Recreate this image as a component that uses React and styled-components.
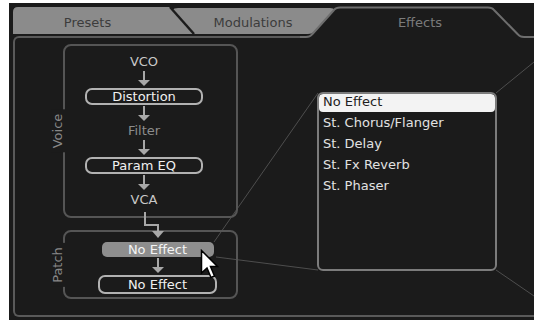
import React from 'react';
import styled, { createGlobalStyle } from 'styled-components';

const GlobalStyle = createGlobalStyle`
  html, body {
    margin: 0;
    padding: 0;
    background: #fff;
  }
  body {
    font-family: "DejaVu Sans", Verdana, sans-serif;
  }
`;

const Frame = styled.div`
  margin: 3px 0 0 9px;
  width: 525px;
  height: 317px;
  background: #1b1b1b;
  display: flex;
  flex-direction: column;
  overflow: hidden;
`;

const TabBar = styled.div`
  position: relative;
  z-index: 2;
  flex: none;
  display: flex;
  align-items: flex-start;
  height: 33px;
  padding-left: 4px;
`;

const Tab = styled.div`
  position: relative;
  flex: none;
  box-sizing: border-box;
  width: ${p => p.$w}px;
  height: ${p => p.$h}px;
  margin-top: ${p => p.$top}px;
  margin-left: ${p => p.$shift || 0}px;
  z-index: ${p => p.$z};
  display: flex;
  align-items: center;
  justify-content: center;
  padding: ${p => p.$pad};
  font-size: 13px;
  color: ${p => (p.$active ? '#7b7b7b' : '#3c3c3c')};
`;

const TabShape = styled.svg`
  position: absolute;
  left: 0;
  top: 0;
  z-index: -1;
  overflow: visible;
`;

const TabLabel = styled.span`
  position: relative;
`;

const Panel = styled.div`
  position: relative;
  flex: none;
  box-sizing: border-box;
  margin-left: 4px;
  width: 540px;
  height: 281px;
  border: 2px solid #5a5a5a;
  border-right: none;
  border-radius: 6px 0 0 6px;
  display: flex;
  align-items: flex-start;
  padding: 6px 0 0 48px;
`;

const Wires = styled.svg`
  position: absolute;
  left: 0;
  top: 0;
  pointer-events: none;
`;

const LeftColumn = styled.div`
  position: relative;
  z-index: 1;
  width: 175px;
  display: flex;
  flex-direction: column;
`;

const GroupBox = styled.div`
  position: relative;
  box-sizing: border-box;
  height: ${p => p.$h}px;
  border: 2px solid #555;
  border-radius: 8px;
  padding: ${p => p.$pad};
`;

const Legend = styled.div`
  position: absolute;
  left: -14px;
  top: 50%;
  transform: translateY(-50%) rotate(180deg);
  writing-mode: vertical-rl;
  background: #1b1b1b;
  padding: 4px 0;
  line-height: 14px;
  font-size: 13px;
  color: #888;
`;

const Chain = styled.div`
  width: ${p => p.$w}px;
  display: flex;
  flex-direction: column;
  align-items: center;
`;

const Stage = styled.div`
  height: 16px;
  line-height: 16px;
  font-size: 13px;
  color: ${p => (p.$dim ? '#8c8c8c' : '#c8c8c8')};
`;

const Module = styled.div`
  box-sizing: border-box;
  width: ${p => p.$w || 118}px;
  height: ${p => p.$h || 17}px;
  border: 2px solid #b2b2b2;
  border-radius: 7px;
  line-height: ${p => (p.$h || 17) - 4}px;
  text-align: center;
  font-size: 13px;
  color: #f0f0f0;
`;

const Pill = styled.div`
  width: 112px;
  height: 15px;
  border-radius: 5px;
  background: #8e8e8e;
  line-height: 15px;
  text-align: center;
  font-size: 13px;
  color: #f4f4f4;
`;

const Connector = styled.svg`
  position: relative;
  z-index: 1;
  display: block;
  margin: -10px 0;
`;

const Cursor = styled.svg`
  position: absolute;
  left: 135px;
  top: 17px;
`;

const Dropdown = styled.div`
  position: relative;
  z-index: 1;
  box-sizing: border-box;
  margin: 48px 0 0 79px;
  width: 180px;
  height: 179px;
  border: 2px solid #7c7c7c;
  border-radius: 6px;
  background: #1b1b1b;
  overflow: hidden;
`;

const Option = styled.div`
  height: ${p => (p.$selected ? 18 : 21)}px;
  line-height: ${p => (p.$selected ? 16 : 21)}px;
  padding-left: 4px;
  border-radius: ${p => (p.$selected ? '4px' : '0')};
  background: ${p => (p.$selected ? '#f3f3f3' : 'transparent')};
  color: ${p => (p.$selected ? '#1e1e1e' : '#e2e2e2')};
  font-size: 13px;
  white-space: nowrap;
`;

const Arrow = () => (
  <svg width="14" height="18" viewBox="0 0 14 18" style={{ display: 'block' }}>
    <rect x="6" y="1" width="2" height="10" fill="#a8a8a8" />
    <path d="M1 10 L13 10 L7 16 Z" fill="#a8a8a8" />
  </svg>
);

const effects = ['No Effect', 'St. Chorus/Flanger', 'St. Delay', 'St. Fx Reverb', 'St. Phaser'];

export default function App() {
  return (
    <>
      <GlobalStyle />
      <Frame>
        <TabBar>
          <Tab $w={181} $h={27} $top={4} $z={2} $pad="3px 32px 0 0">
            <TabShape width="181" height="27">
              <path d="M0 27 L0 5 Q0 0 5 0 L157 0 L181 27 Z" fill="#8b8b8b" />
              <path d="M157 0 L181 27" stroke="#1c1c1c" strokeWidth="2.5" />
            </TabShape>
            <TabLabel>Presets</TabLabel>
          </Tab>
          <Tab $w={186} $h={26} $top={5} $z={1} $shift={-44} $pad="2px 0 0 20px">
            <TabShape width="186" height="26">
              <path
                d="M0 26 L22 2 Q24 0 28 0 L180 0 Q186 0 183 4 L164 24 Q162 26 158 26 Z"
                fill="#8b8b8b"
              />
            </TabShape>
            <TabLabel>Modulations</TabLabel>
          </Tab>
          <Tab $w={234} $h={32} $top={4} $z={3} $shift={-36} $pad="0 0 2px 6px" $active>
            <TabShape width="234" height="32">
              <path
                d="M0 30 L6 30 Q10 30 12 27.5 L34 3 Q36 0.5 40 0.5 L188 0.5 Q192 0.5 194 3 L218 27.5 Q220 30 224 30 L234 30 L234 32 L0 32 Z"
                fill="#1b1b1b"
              />
              <path
                d="M0 30 L6 30 Q10 30 12 27.5 L34 3 Q36 0.5 40 0.5 L188 0.5 Q192 0.5 194 3 L218 27.5 Q220 30 224 30 L234 30"
                fill="none"
                stroke="#6e6e6e"
                strokeWidth="2"
              />
            </TabShape>
            <TabLabel>Effects</TabLabel>
          </Tab>
        </TabBar>

        <Panel>
          <Wires width="525" height="281">
            <g stroke="#4e4e4e" strokeWidth="1">
              <line x1="199" y1="204" x2="303" y2="55" />
              <line x1="201" y1="219" x2="303" y2="232" />
              <line x1="481" y1="55" x2="519" y2="24" />
              <line x1="481" y1="232" x2="519" y2="258" />
            </g>
          </Wires>

          <LeftColumn>
            <GroupBox $h={174} $pad="8px 0 0 20px">
              <Legend>Voice</Legend>
              <Chain $w={118}>
                <Stage>VCO</Stage>
                <Arrow />
                <Module>Distortion</Module>
                <Arrow />
                <Stage $dim>Filter</Stage>
                <Arrow />
                <Module>Param EQ</Module>
                <Arrow />
                <Stage>VCA</Stage>
              </Chain>
            </GroupBox>

            <Connector width="175" height="32" viewBox="0 0 175 32">
              <path d="M82 4 L82 17 L95 17 L95 24" fill="none" stroke="#a8a8a8" strokeWidth="2" />
              <path d="M89 23 L101 23 L95 30 Z" fill="#a8a8a8" />
            </Connector>

            <GroupBox $h={69} $pad="10px 0 0 33px">
              <Legend>Patch</Legend>
              <Chain $w={119}>
                <Pill>No Effect</Pill>
                <Arrow />
                <Module $w={119} $h={19}>No Effect</Module>
              </Chain>
              <Cursor width="20" height="32" viewBox="0 0 20 32">
                <path
                  d="M1.5 1.5 L1.5 24 L7 19 L11 28.5 L14.5 27 L10.5 17.5 L17.5 17.5 Z"
                  fill="#fff"
                  stroke="#000"
                  strokeWidth="1.5"
                  strokeLinejoin="miter"
                />
              </Cursor>
            </GroupBox>
          </LeftColumn>

          <Dropdown>
            {effects.map((name, i) => (
              <Option key={name} $selected={i === 0}>
                {name}
              </Option>
            ))}
          </Dropdown>
        </Panel>
      </Frame>
    </>
  );
}
